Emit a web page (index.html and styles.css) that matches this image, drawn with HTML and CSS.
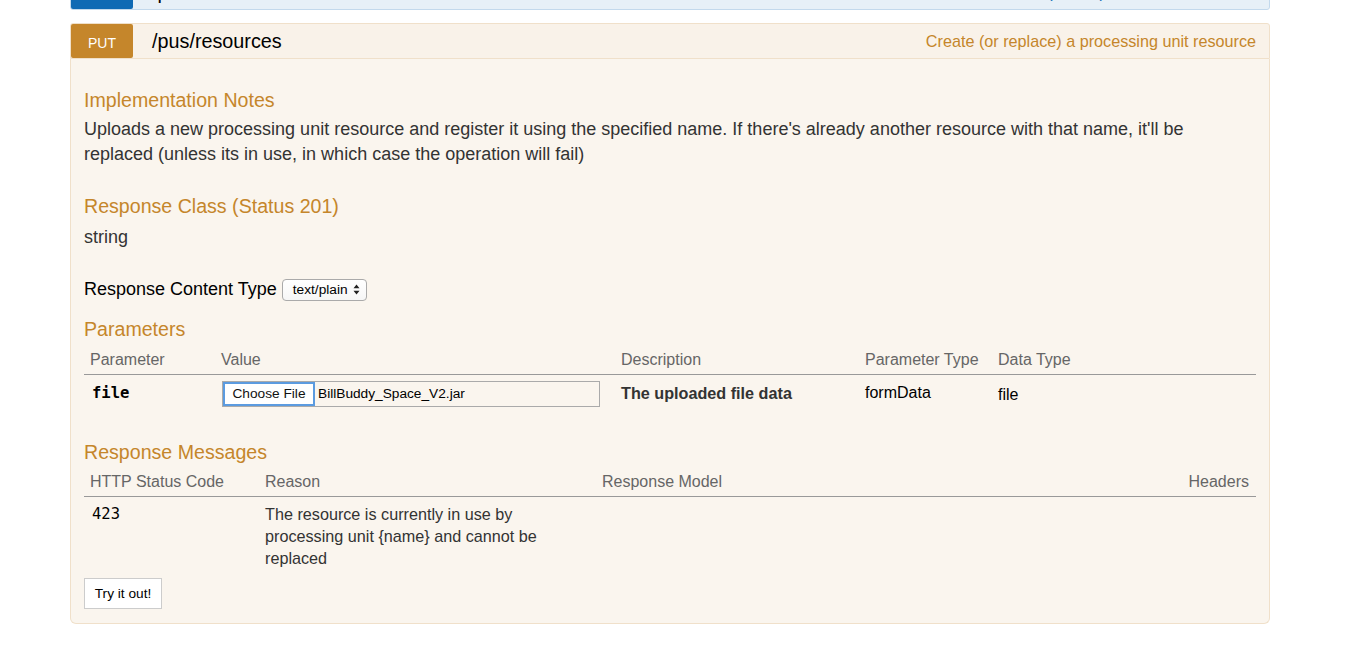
FILE: index.html
```html
<!DOCTYPE html>
<html>
<head>
<meta charset="utf-8">
<link rel="stylesheet" href="styles.css">
</head>
<body>
<ul class="operations">
  <li class="operation get">
    <div class="heading">
      <span class="method">GET</span>
      <span class="path">/pus/resources</span>
      <span class="summary">Lists all the (known) unit resource names</span>
    </div>
  </li>
  <li class="operation put">
    <div class="heading">
      <span class="method">PUT</span>
      <span class="path">/pus/resources</span>
      <span class="summary">Create (or replace) a processing unit resource</span>
    </div>
    <div class="content">
      <h4 class="first">Implementation Notes</h4>
      <p class="notes">Uploads a new processing unit resource and register it using the specified name. If there's already another resource with that name, it'll be replaced (unless its in use, in which case the operation will fail)</p>

      <h4 class="sect">Response Class (Status 201)</h4>
      <p class="model">string</p>

      <div class="ctype">
        <span class="ctype-label">Response Content Type</span>
        <span class="select">text/plain
          <svg class="arrows" width="7" height="11" viewBox="0 0 7 11"><path d="M3.5 0.5 L6.5 4.2 L0.5 4.2 Z M3.5 10.5 L6.5 6.8 L0.5 6.8 Z" fill="#222"/></svg>
        </span>
      </div>

      <h4 class="params-title">Parameters</h4>
      <table class="params">
        <thead>
          <tr>
            <th class="c-param">Parameter</th>
            <th class="c-value">Value</th>
            <th class="c-desc">Description</th>
            <th class="c-ptype">Parameter Type</th>
            <th class="c-dtype">Data Type</th>
          </tr>
        </thead>
        <tbody>
          <tr>
            <td class="code">file</td>
            <td>
              <div class="fileinput">
                <span class="choose">Choose File</span>
                <span class="fname">BillBuddy_Space_V2.jar</span>
              </div>
            </td>
            <td class="desc">The uploaded file data</td>
            <td class="ptype">formData</td>
            <td class="dtype">file</td>
          </tr>
        </tbody>
      </table>

      <h4 class="resp-title">Response Messages</h4>
      <table class="responses">
        <thead>
          <tr>
            <th class="c-code">HTTP Status Code</th>
            <th class="c-reason">Reason</th>
            <th class="c-model">Response Model</th>
            <th class="c-headers">Headers</th>
          </tr>
        </thead>
        <tbody>
          <tr>
            <td class="code">423</td>
            <td><div class="reason">The resource is currently in use by processing unit {name} and cannot be replaced</div></td>
            <td></td>
            <td></td>
          </tr>
        </tbody>
      </table>

      <button class="try">Try it out!</button>
    </div>
  </li>
</ul>
</body>
</html>
```
FILE: styles.css
```css
html, body {
  margin: 0;
  padding: 0;
  background: #ffffff;
}
body {
  font-family: "Liberation Sans", Arial, Helvetica, sans-serif;
  color: #333333;
}
.operations {
  list-style: none;
  margin: -26px 0 0 70px;
  padding: 0;
  width: 1200px;
}
.operation {
  margin: 0 0 13px 0;
}
.heading {
  display: flex;
  align-items: center;
  height: 34px;
  border: 1px solid;
  border-radius: 3px 3px 0 0;
}
.get .heading {
  background: #e7f0f7;
  border-color: #c3d9ec;
  border-radius: 0 0 3px 3px;
}
.put .heading {
  background: #f9f2e9;
  border-color: #f0e0ca;
}
.method {
  width: 62px;
  height: 34px;
  box-sizing: border-box;
  padding-top: 3px;
  display: flex;
  align-items: center;
  justify-content: center;
  color: #ffffff;
  font-size: 14px;
  border-radius: 2px;
}
.get .method { background: #0f6ab4; }
.put .method { background: #c5862b; }
.path {
  margin-left: 19px;
  font-size: 19.8px;
  color: #000000;
  flex: 1;
  padding-top: 1px;
}
.summary {
  font-size: 16.2px;
  margin-right: 13px;
  padding-top: 1px;
}
.get .summary { color: #0f6ab4; }
.put .summary { color: #c5862b; }

.content {
  background: #faf5ee;
  border: 1px solid #f0e0ca;
  border-top: none;
  border-radius: 0 0 6px 6px;
  padding: 29px 13px 14px 13px;
}
h4 {
  margin: 0;
  font-size: 19.6px;
  line-height: 24px;
  font-weight: normal;
  color: #c5862b;
}
.notes {
  margin: 5px 0 0 0;
  font-size: 18px;
  line-height: 25px;
  color: #333333;
}
h4.sect {
  margin-top: 27px;
}
.model {
  margin: 7px 0 0 0;
  font-size: 18px;
  line-height: 25px;
}
.ctype {
  margin-top: 27px;
  display: flex;
  align-items: center;
  height: 25px;
}
.ctype-label {
  font-size: 18px;
  color: #000000;
}
.select {
  margin-left: 5px;
  display: inline-flex;
  align-items: center;
  height: 20px;
  padding: 0 6px 0 10px;
  border: 1px solid #aaaaaa;
  border-radius: 4px;
  background: linear-gradient(#ffffff, #f6f6f6);
  font-size: 13.7px;
  color: #000000;
}
.arrows {
  margin-left: 5px;
}
.params-title {
  margin-top: 15px;
}
table {
  width: 100%;
  border-collapse: collapse;
  font-size: 16px;
}
th {
  text-align: left;
  font-weight: normal;
  color: #666666;
  line-height: 20px;
  padding: 9px 6px 4px 6px;
  border-bottom: 1px solid #999999;
}
.c-param { width: 119px; }
.c-value { width: 388px; }
.c-desc { width: 232px; }
.c-ptype { width: 121px; }
.params td {
  padding: 6px 6px 6px 6px;
  vertical-align: middle;
  line-height: 20px;
}
.params td.code {
  padding-left: 8px;
  padding-bottom: 8px;
}
.code {
  font-family: "DejaVu Sans Mono", "Liberation Mono", monospace;
  font-size: 15.5px;
  color: #000000;
}
.params .code {
  font-weight: bold;
}
.fileinput {
  display: flex;
  align-items: center;
  width: 376px;
  height: 24px;
  border: 1px solid #aaaaaa;
  background: #faf5ee;
  margin-left: 1px;
}
.choose {
  display: flex;
  align-items: center;
  justify-content: center;
  width: 88px;
  height: 20px;
  background: #ffffff;
  border: 2px solid #5b9be0;
  font-size: 13.7px;
  color: #111111;
}
.fname {
  margin-left: 3px;
  font-size: 13.7px;
  color: #000000;
}
.params td.desc {
  font-weight: bold;
  font-size: 16.2px;
  color: #333333;
  padding-bottom: 9px;
}
.ptype, .dtype {
  color: #000000;
}
.params td.dtype {
  padding-top: 7px;
}
.params td.ptype {
  padding-bottom: 9px;
}
.resp-title {
  margin-top: 27px;
}
.responses th {
  padding-top: 8px;
}
.c-code { width: 163px; }
.c-reason { width: 325px; }
.c-headers {
  text-align: right;
  padding-right: 7px !important;
}
.responses td {
  padding: 6px 6px 0 6px;
  vertical-align: top;
  line-height: 22px;
}
.responses td.code {
  padding-left: 8px;
}
.reason {
  max-width: 290px;
  font-size: 16.2px;
  color: #333333;
}
.try {
  display: block;
  margin-top: 9px;
  width: 78px;
  height: 31px;
  padding: 0;
  background: #ffffff;
  border: 1px solid #cccccc;
  font-family: "Liberation Sans", Arial, sans-serif;
  font-size: 13.7px;
  color: #000000;
}
```
